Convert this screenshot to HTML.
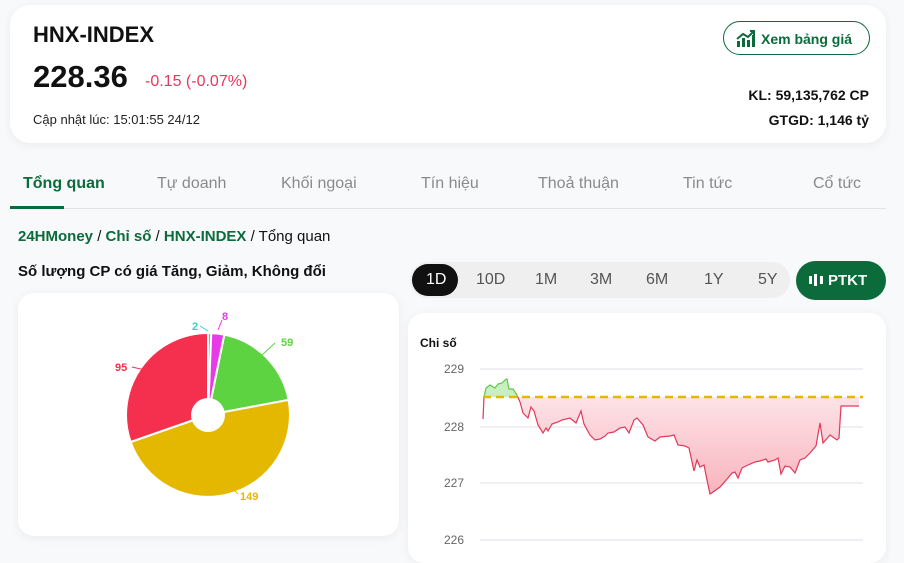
<!DOCTYPE html>
<html><head><meta charset="utf-8"><style>
*{margin:0;padding:0;box-sizing:border-box}
body{width:904px;height:550px;overflow:hidden;background:#f8f9fb;font-family:"Liberation Sans","Noto Sans CJK SC",sans-serif;position:relative;color:#111}
.card{position:absolute;background:#fff;border-radius:20px;box-shadow:0 2px 10px rgba(0,0,0,.06)}
.abs{position:absolute;white-space:nowrap}
.tab{position:absolute;top:175px;font-size:16px;color:#8a8a8a}
.per{position:absolute;top:271px;font-size:16px;color:#555}
</style></head><body>
<div class="card" style="left:10px;top:5px;width:876px;height:138px"></div>
<div class="abs" style="left:33px;top:22px;font-size:22px;font-weight:bold">HNX-INDEX</div>
<div class="abs" style="left:33px;top:59px;font-size:31px;font-weight:bold">228.36</div>
<div class="abs" style="left:145px;top:73px;font-size:16px;color:#e8365d">-0.15 (-0.07%)</div>
<div class="abs" style="left:33px;top:112px;font-size:13px;color:#222">Cập nhật lúc: 15:01:55 24/12</div>
<div class="abs" style="left:723px;top:21px;width:147px;height:34px;border:1px solid #0b6b3a;border-radius:17px;color:#0b6b3a;font-weight:bold;font-size:14px;padding:9px 0 0 37px">Xem bảng giá
<svg style="position:absolute;left:12px;top:8px" width="20" height="18" viewBox="0 0 20 18"><g fill="#0b6b3a"><rect x="1" y="11" width="3" height="6"/><rect x="6" y="8" width="3" height="9"/><rect x="11" y="10" width="3" height="7"/><rect x="16" y="5" width="3" height="12"/></g><path d="M1 9L7 4L12 7L18 1M14 1h4v4" stroke="#0b6b3a" stroke-width="2" fill="none"/></svg></div>
<div class="abs" style="right:35px;top:87px;font-size:14px;font-weight:bold">KL: 59,135,762 CP</div>
<div class="abs" style="right:35px;top:112px;font-size:14px;font-weight:bold">GTGD: 1,146 tỷ</div>

<div class="tab" style="left:23px;color:#0b6b3a;font-weight:bold">Tổng quan</div>
<div class="tab" style="left:157px">Tự doanh</div>
<div class="tab" style="left:281px">Khối ngoại</div>
<div class="tab" style="left:421px">Tín hiệu</div>
<div class="tab" style="left:538px">Thoả thuận</div>
<div class="tab" style="left:683px">Tin tức</div>
<div class="tab" style="left:813px">Cổ tức</div>
<div class="abs" style="left:10px;top:208px;width:876px;height:1px;background:#e3e3e3"></div>
<div class="abs" style="left:10px;top:206px;width:54px;height:3px;background:#0b6b3a"></div>

<div class="abs" style="left:18px;top:228px;font-size:15px"><b style="color:#0b6b3a">24HMoney</b> / <b style="color:#0b6b3a">Chỉ số</b> / <b style="color:#0b6b3a">HNX-INDEX</b> / Tổng quan</div>
<div class="abs" style="left:18px;top:263px;font-size:15px;font-weight:bold">Số lượng CP có giá Tăng, Giảm, Không đổi</div>

<div class="card" style="left:18px;top:293px;width:381px;height:243px;border-radius:16px"></div>
<svg class="abs" style="left:0;top:0" width="400" height="550">
<g stroke="#fff" stroke-width="2">
<path d="M208 415L208 333A82 82 0 0 1 211.3 333.1Z" fill="#2fd6c8"/>
<path d="M208 415L211.3 333.1A82 82 0 0 1 224.4 334.6Z" fill="#e83be8"/>
<path d="M208 415L224.4 334.6A82 82 0 0 1 288.6 399.9Z" fill="#5ed341"/>
<path d="M208 415L288.6 399.9A82 82 0 0 1 130.6 442Z" fill="#e5b800"/>
<path d="M208 415L130.6 442A82 82 0 0 1 208 333Z" fill="#f5304f"/>
</g>
<circle cx="208" cy="415" r="17" fill="#fff"/>
<g fill="none" stroke-width="1"><path d="M208 331L200 326" stroke="#2fd6c8"/><path d="M218 330L222 320" stroke="#e83be8"/><path d="M262 355L275 343" stroke="#5ed341"/><path d="M232 488L238 494" stroke="#e5b800"/><path d="M145 370L132 367" stroke="#f5304f"/></g>
<g font-size="11" font-weight="bold" font-family="Liberation Sans"><text x="192" y="330" fill="#2fd6c8">2</text><text x="222" y="320" fill="#e83be8">8</text><text x="281" y="346" fill="#5ed341">59</text><text x="240" y="500" fill="#e5b800">149</text><text x="115" y="371" fill="#f5304f">95</text></g>
</svg>

<div class="abs" style="left:410px;top:262px;width:380px;height:36px;background:#efefef;border-radius:18px"></div>
<div class="abs" style="left:412px;top:264px;width:46px;height:32px;background:#111;border-radius:16px"></div>
<div class="per" style="left:426px;color:#fff">1D</div>
<div class="per" style="left:476px">10D</div>
<div class="per" style="left:535px">1M</div>
<div class="per" style="left:590px">3M</div>
<div class="per" style="left:646px">6M</div>
<div class="per" style="left:704px">1Y</div>
<div class="per" style="left:758px">5Y</div>
<div class="abs" style="left:796px;top:261px;width:90px;height:39px;background:#0b6b3a;border-radius:20px;color:#fff;font-weight:bold;font-size:15px;padding:11px 0 0 32px">PTKT
<svg style="position:absolute;left:12px;top:12px" width="16" height="14" viewBox="0 0 16 14"><g fill="#fff"><rect x="1" y="3" width="3" height="8"/><rect x="6" y="1" width="3" height="12"/><rect x="12" y="3" width="3" height="8"/></g></svg></div>

<div class="card" style="left:408px;top:313px;width:478px;height:250px;border-radius:16px"></div>
<div class="abs" style="left:420px;top:336px;font-size:12px;font-weight:bold">Chi số</div>
<svg class="abs" style="left:0;top:0" width="904" height="550">
<defs>
<linearGradient id="rg" x1="0" y1="397" x2="0" y2="495" gradientUnits="userSpaceOnUse"><stop offset="0" stop-color="#fde3e7"/><stop offset="1" stop-color="#f9b3bd"/></linearGradient>
<clipPath id="cr"><rect x="470" y="397" width="400" height="150"/></clipPath>
<clipPath id="cg"><rect x="470" y="300" width="400" height="97"/></clipPath>
</defs>
<g stroke="#e2e2ea" stroke-width="1"><path d="M480 369H863M480 427H863M480 483H863M480 540H863"/></g>
<g fill="#666" font-size="12" font-family="Liberation Sans"><text x="444" y="373">229</text><text x="444" y="431">228</text><text x="444" y="487">227</text><text x="444" y="544">226</text></g>
<path id="ln" d="M483 419L484 397L486 388L490 385L495 388L498 384L502 383L505 380L507 379L509 389L513 389L517 395L520 402L523 413L528 418L531 407L534 411L538 425L543 433L546 428L548 431L552 424L558 422L562 420L570 418L576 423L581 411L584 424L590 435L595 440L600 439L605 436L608 433L614 432L620 428L625 427L629 433L634 420L637 418L643 425L648 437L655 441L660 437L670 436L674 435L678 445L685 446L689 448L694 471L697 460L700 467L704 465L707 480L710 494L713 492L720 487L728 478L732 473L735 472L738 478L742 468L748 465L755 462L760 461L766 459L768 462L775 460L778 458L781 474L785 466L790 467L795 473L800 460L805 458L810 453L816 446L820 423L823 443L830 435L837 440L839 438L841 406L859 406" fill="none"/>
<path d="M483 419L484 397L486 388L490 385L495 388L498 384L502 383L505 380L507 379L509 389L513 389L517 395L520 402L523 413L528 418L531 407L534 411L538 425L543 433L546 428L548 431L552 424L558 422L562 420L570 418L576 423L581 411L584 424L590 435L595 440L600 439L605 436L608 433L614 432L620 428L625 427L629 433L634 420L637 418L643 425L648 437L655 441L660 437L670 436L674 435L678 445L685 446L689 448L694 471L697 460L700 467L704 465L707 480L710 494L713 492L720 487L728 478L732 473L735 472L738 478L742 468L748 465L755 462L760 461L766 459L768 462L775 460L778 458L781 474L785 466L790 467L795 473L800 460L805 458L810 453L816 446L820 423L823 443L830 435L837 440L839 438L841 406L859 406L859 397L483 397Z" fill="url(#rg)" clip-path="url(#cr)"/>
<path d="M484 397L486 388L490 385L495 388L498 384L502 383L505 380L507 379L509 389L513 389L517 395L520 402Z" fill="#c9efc0" clip-path="url(#cg)"/>
<use href="#ln" stroke="#e0395a" stroke-width="1.2" clip-path="url(#cr)"/>
<use href="#ln" stroke="#5ec94a" stroke-width="1.2" clip-path="url(#cg)"/>
<path d="M483 397H863" stroke="#e5b800" stroke-width="2.5" stroke-dasharray="8 5"/>
</svg>
</body></html>
